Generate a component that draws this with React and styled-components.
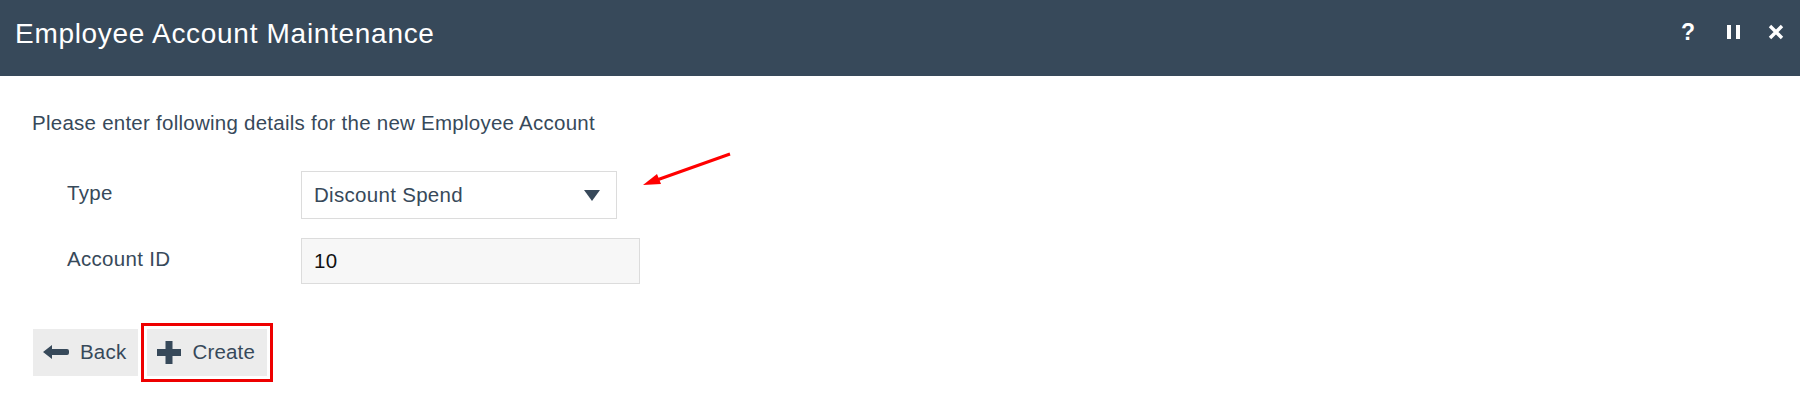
import styled, { createGlobalStyle } from "styled-components";

const GlobalStyle = createGlobalStyle`
  html, body {
    margin: 0;
    padding: 0;
    background: #ffffff;
    font-family: "Liberation Sans", Arial, sans-serif;
  }
`;

const SLATE = "#37495a";

const Page = styled.div`
  position: relative;
  width: 1800px;
  height: 406px;
  background: #ffffff;
`;

const Header = styled.div`
  display: flex;
  align-items: center;
  height: 76px;
  padding: 0 16px 8px 15px;
  box-sizing: border-box;
  background: ${SLATE};
  color: #ffffff;
`;

const Title = styled.h1`
  flex: 1;
  margin: 0;
  font-size: 28px;
  line-height: 1;
  font-weight: 400;
  letter-spacing: 0.7px;
`;

const HeaderTools = styled.div`
  display: flex;
  align-items: center;
  margin-bottom: 4px;
`;

const ToolButton = styled.span`
  display: flex;
  align-items: center;
  justify-content: center;
  margin-left: ${(props) => props.gap || 0}px;
  color: #ffffff;
  font-size: 23px;
  font-weight: 700;
  line-height: 1;
  cursor: pointer;
`;

const Body = styled.div`
  padding: 37px 32px 0 32px;
  color: ${SLATE};
`;

const Intro = styled.p`
  margin: 0;
  font-size: 20.5px;
  line-height: 1;
  letter-spacing: 0.25px;
`;

const Form = styled.div`
  display: flex;
  flex-direction: column;
  gap: 19px;
  margin-top: 37px;
  padding-left: 35px;
`;

const Row = styled.div`
  display: flex;
  align-items: center;
`;

const Label = styled.label`
  width: 234px;
  padding-bottom: 4px;
  font-size: 20.5px;
  letter-spacing: 0.3px;
`;

const Select = styled.div`
  display: flex;
  align-items: center;
  justify-content: space-between;
  width: 316px;
  height: 48px;
  padding: 0 16px 0 12px;
  box-sizing: border-box;
  border: 1px solid #dcdcdc;
  background: #ffffff;
  font-size: 20.5px;
  letter-spacing: 0.3px;
  color: ${SLATE};
`;

const Caret = styled.span`
  width: 0;
  height: 0;
  border-left: 8px solid transparent;
  border-right: 8px solid transparent;
  border-top: 11px solid ${SLATE};
  margin-top: 2px;
`;

const Input = styled.div`
  display: flex;
  align-items: center;
  width: 339px;
  height: 46px;
  padding: 0 12px;
  box-sizing: border-box;
  border: 1px solid #dcdcdc;
  background: #f7f7f7;
  font-size: 20.5px;
  letter-spacing: 0.3px;
  color: #111111;
`;

const Actions = styled.div`
  display: flex;
  gap: 9px;
  margin-top: 45px;
  margin-left: 1px;
`;

const Button = styled.button`
  display: flex;
  align-items: center;
  gap: 11px;
  height: 47px;
  padding: 0 12px 0 10px;
  border: none;
  background: #ececec;
  color: ${SLATE};
  font-family: "Liberation Sans", Arial, sans-serif;
  font-size: 20.5px;
  letter-spacing: 0.2px;
  cursor: pointer;
  outline: ${(props) => (props.highlighted ? "3px solid #ee0000" : "none")};
  outline-offset: 3px;
`;

const Pointer = styled.svg`
  position: absolute;
  left: 636px;
  top: 148px;
`;

const HelpIcon = () => <ToolButton>?</ToolButton>;

const PauseIcon = () => (
  <svg width="13" height="14" viewBox="0 0 13 14">
    <rect x="0" y="0" width="4" height="14" fill="#fff" />
    <rect x="9" y="0" width="4" height="14" fill="#fff" />
  </svg>
);

const CloseIcon = () => (
  <svg width="16" height="16" viewBox="0 0 16 16">
    <path d="M2 2 L14 14 M14 2 L2 14" stroke="#fff" strokeWidth="3.4" />
  </svg>
);

const BackArrow = () => (
  <svg width="26" height="14" viewBox="0 0 26 14">
    <path
      d="M0 7 L9 0 L9 4 L24 4 Q26 4 26 6 L26 8 Q26 10 24 10 L9 10 L9 14 Z"
      fill={SLATE}
    />
  </svg>
);

const PlusIcon = () => (
  <svg width="24" height="23" viewBox="0 0 24 23">
    <rect x="8.5" y="0" width="7" height="23" fill={SLATE} />
    <rect x="0" y="8" width="24" height="7" fill={SLATE} />
  </svg>
);

const App = () => {
  return (
    <Page>
      <GlobalStyle />
      <Header>
        <Title>Employee Account Maintenance</Title>
        <HeaderTools>
          <HelpIcon />
          <ToolButton gap={32}>
            <PauseIcon />
          </ToolButton>
          <ToolButton gap={28}>
            <CloseIcon />
          </ToolButton>
        </HeaderTools>
      </Header>
      <Body>
        <Intro>Please enter following details for the new Employee Account</Intro>
        <Form>
          <Row>
            <Label>Type</Label>
            <Select>
              <span>Discount Spend</span>
              <Caret />
            </Select>
          </Row>
          <Row>
            <Label>Account ID</Label>
            <Input>10</Input>
          </Row>
        </Form>
        <Actions>
          <Button>
            <BackArrow />
            Back
          </Button>
          <Button highlighted>
            <PlusIcon />
            Create
          </Button>
        </Actions>
      </Body>
      <Pointer width="100" height="44" viewBox="0 0 100 44">
        <line x1="94" y1="6" x2="18" y2="33" stroke="#ff0000" strokeWidth="3" />
        <polygon points="7,37 21,26 25,36" fill="#ff0000" />
      </Pointer>
    </Page>
  );
};

export default App;
